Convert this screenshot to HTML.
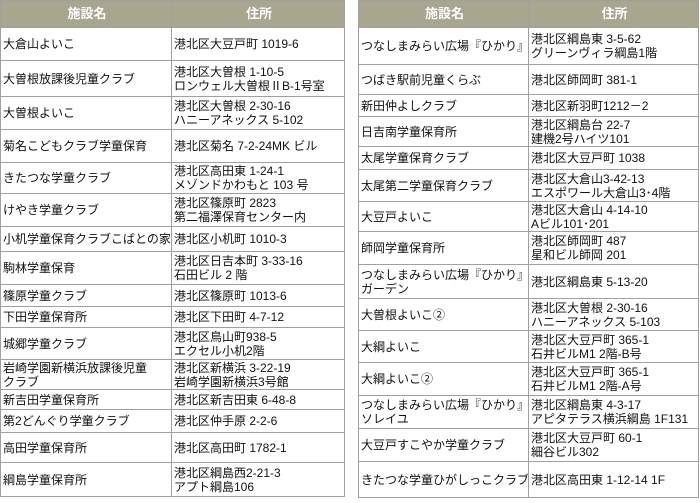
<!DOCTYPE html>
<html><head><meta charset="utf-8"><style>
body{margin:0;background:#fff;width:700px;height:503px;overflow:hidden;font-family:"Liberation Sans","Noto Sans CJK JP",sans-serif;}
table{position:absolute;top:0;border-collapse:collapse;table-layout:fixed;font-size:12px;color:#111;}
td,th{border:1px solid #a0a0a0;padding:0 0 0 2px;line-height:14px;vertical-align:middle;white-space:nowrap;overflow:hidden;}
th{background:#a9a690;color:#fff;font-size:13px;font-weight:bold;text-align:center;height:26px;}
#L{left:0;width:344px}
#R{left:358px;width:340px}
</style></head><body>
<table id="L">
<colgroup><col style="width:171px"><col style="width:173px"></colgroup>
<tr><th>施設名</th><th>住所</th></tr>
<tr style="height:33px"><td>大倉山よいこ</td><td>港北区大豆戸町 1019-6</td></tr>
<tr style="height:36px"><td>大曽根放課後児童クラブ</td><td>港北区大曽根 1-10-5<br>ロンウェル大曽根ⅡB-1号室</td></tr>
<tr style="height:33px"><td>大曽根よいこ</td><td>港北区大曽根 2-30-16<br>ハニーアネックス 5-102</td></tr>
<tr style="height:33px"><td>菊名こどもクラブ学童保育</td><td>港北区菊名 7-2-24MK ビル</td></tr>
<tr style="height:31px"><td>きたつな学童クラブ</td><td>港北区高田東 1-24-1<br>メゾンドかわもと 103 号</td></tr>
<tr style="height:33px"><td>けやき学童クラブ</td><td>港北区篠原町 2823<br>第二福澤保育センター内</td></tr>
<tr style="height:25px"><td>小机学童保育クラブこばとの家</td><td>港北区小机町 1010-3</td></tr>
<tr style="height:33px"><td>駒林学童保育</td><td>港北区日吉本町 3-33-16<br>石田ビル 2 階</td></tr>
<tr style="height:22px"><td>篠原学童クラブ</td><td>港北区篠原町 1013-6</td></tr>
<tr style="height:21px"><td>下田学童保育所</td><td>港北区下田町 4-7-12</td></tr>
<tr style="height:32px"><td>城郷学童クラブ</td><td>港北区鳥山町938-5<br>エクセル小机2階</td></tr>
<tr style="height:30px"><td>岩崎学園新横浜放課後児童<br>クラブ</td><td>港北区新横浜 3-22-19<br>岩崎学園新横浜3号館</td></tr>
<tr style="height:20px"><td>新吉田学童保育所</td><td>港北区新吉田東 6-48-8</td></tr>
<tr style="height:23px"><td>第2どんぐり学童クラブ</td><td>港北区仲手原 2-2-6</td></tr>
<tr style="height:30px"><td>高田学童保育所</td><td>港北区高田町 1782-1</td></tr>
<tr style="height:34px"><td>綱島学童保育所</td><td>港北区綱島西2-21-3<br>アプト綱島106</td></tr>
</table>
<table id="R">
<colgroup><col style="width:170px"><col style="width:170px"></colgroup>
<tr><th>施設名</th><th>住所</th></tr>
<tr style="height:37px"><td>つなしまみらい広場『ひかり』</td><td>港北区綱島東 3-5-62<br>グリーンヴィラ綱島1階</td></tr>
<tr style="height:30px"><td>つばき駅前児童くらぶ</td><td>港北区師岡町 381-1</td></tr>
<tr style="height:22px"><td>新田仲よしクラブ</td><td>港北区新羽町1212－2</td></tr>
<tr style="height:30px"><td>日吉南学童保育所</td><td>港北区綱島台 22-7<br>建機2号ハイツ101</td></tr>
<tr style="height:23px"><td>太尾学童保育クラブ</td><td>港北区大豆戸町 1038</td></tr>
<tr style="height:32px"><td>太尾第二学童保育クラブ</td><td>港北区大倉山3-42-13<br>エスポワール大倉山3･4階</td></tr>
<tr style="height:30px"><td>大豆戸よいこ</td><td>港北区大倉山 4-14-10<br>Aビル101･201</td></tr>
<tr style="height:33px"><td>師岡学童保育所</td><td>港北区師岡町 487<br>星和ビル師岡 201</td></tr>
<tr style="height:34px"><td>つなしまみらい広場『ひかり』<br>ガーデン</td><td>港北区綱島東 5-13-20</td></tr>
<tr style="height:32px"><td>大曽根よいこ②</td><td>港北区大曽根 2-30-16<br>ハニーアネックス 5-103</td></tr>
<tr style="height:32px"><td>大綱よいこ</td><td>港北区大豆戸町 365-1<br>石井ビルM1 2階-B号</td></tr>
<tr style="height:33px"><td>大綱よいこ②</td><td>港北区大豆戸町 365-1<br>石井ビルM1 2階-A号</td></tr>
<tr style="height:33px"><td>つなしまみらい広場『ひかり』<br>ソレイユ</td><td>港北区綱島東 4-3-17<br>アピタテラス横浜綱島 1F131</td></tr>
<tr style="height:33px"><td>大豆戸すこやか学童クラブ</td><td>港北区大豆戸町 60-1<br>細谷ビル302</td></tr>
<tr style="height:36px"><td>きたつな学童ひがしっこクラブ</td><td>港北区高田東 1-12-14 1F</td></tr>
</table>
</body></html>
